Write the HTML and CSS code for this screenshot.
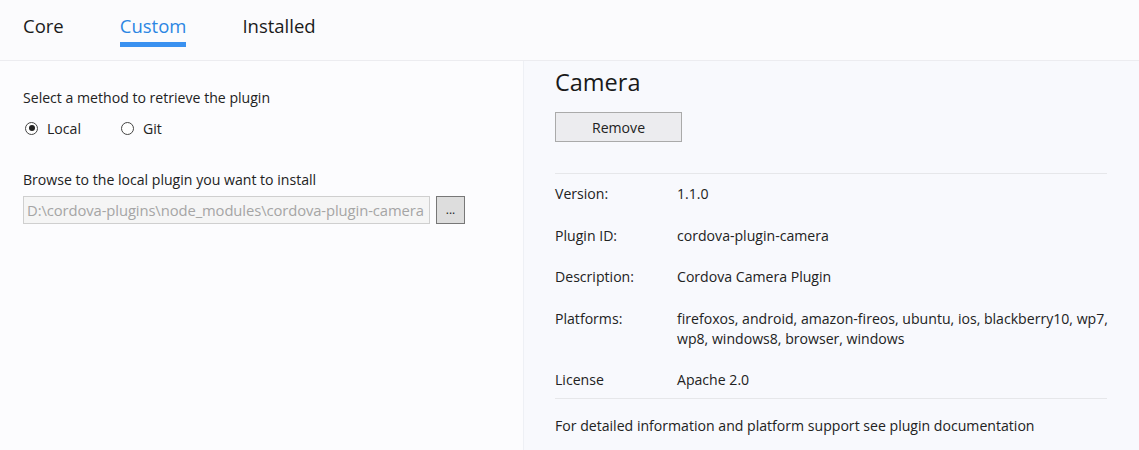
FILE: index.html
```html
<!DOCTYPE html>
<html>
<head>
<meta charset="utf-8">
<link rel="stylesheet" href="styles.css">
</head>
<body>
<div class="page">
  <header class="tabs">
    <div class="tab">Core</div>
    <div class="tab active">Custom</div>
    <div class="tab">Installed</div>
  </header>
  <main class="content">
    <section class="left">
      <div class="label">Select a method to retrieve the plugin</div>
      <div class="radios">
        <label class="radio"><span class="circle checked"></span>Local</label>
        <label class="radio"><span class="circle"></span>Git</label>
      </div>
      <div class="label browse-label">Browse to the local plugin you want to install</div>
      <div class="browse">
        <div class="path">D:\cordova-plugins\node_modules\cordova-plugin-camera</div>
        <button class="dots">...</button>
      </div>
    </section>
    <section class="right">
      <h1 class="title">Camera</h1>
      <button class="remove">Remove</button>
      <hr class="sep first">
      <div class="details">
        <div class="row"><div class="key">Version:</div><div class="val">1.1.0</div></div>
        <div class="row"><div class="key">Plugin ID:</div><div class="val">cordova-plugin-camera</div></div>
        <div class="row"><div class="key">Description:</div><div class="val">Cordova Camera Plugin</div></div>
        <div class="row"><div class="key">Platforms:</div><div class="val wide">firefoxos, android, amazon-fireos, ubuntu, ios, blackberry10, wp7, wp8, windows8, browser, windows</div></div>
        <div class="row"><div class="key">License</div><div class="val">Apache 2.0</div></div>
      </div>
      <hr class="sep">
      <div class="footer">For detailed information and platform support see plugin documentation</div>
    </section>
  </main>
</div>
</body>
</html>
```

FILE: styles.css
```css
* { box-sizing: border-box; }
html, body { margin: 0; padding: 0; }
body {
  font-family: "Open Sans", "Noto Sans", "Liberation Sans", sans-serif;
  font-size: 14.1px;
  color: #222;
  background: #fcfcfe;
  width: 1139px;
  height: 450px;
  overflow: hidden;
}
.page { display: flex; flex-direction: column; height: 450px; }
.tabs {
  height: 61px;
  display: flex;
  padding-left: 23px;
  background: #fbfbfd;
  border-bottom: 1px solid #ececf0;
}
.tab {
  font-size: 18.5px;
  color: #1a1a1a;
  padding-top: 13px;
  margin-right: 56px;
  height: 47px;
  border-bottom: 5px solid transparent;
  line-height: 25px;
}
.tab.active { color: #2b86e3; border-bottom-color: #3a91f0; }
.content { flex: 1; display: flex; }
.left {
  width: 524px;
  padding: 27px 23px 0 23px;
  border-right: 1px solid #eef0f5;
  background: #fcfcfe;
}
.label { line-height: 20px; }
.radios { display: flex; margin-top: 10px; height: 20px; align-items: center; }
.radio { display: flex; align-items: center; margin-left: 2px; }
.radio:first-child { width: 94px; }
.circle {
  width: 13px; height: 13px; border-radius: 50%;
  border: 1px solid #444; background: #fff;
  margin-right: 9px; position: relative;
}
.circle.checked::after {
  content: ""; position: absolute; left: 2.5px; top: 2.5px;
  width: 6px; height: 6px; border-radius: 50%; background: #222;
}
.browse-label { margin-top: 32px; }
.browse { display: flex; margin-top: 6px; gap: 6px; }
.path {
  width: 407px; height: 28px;
  border: 1px solid #cfcfcf; background: #f5f5f5;
  color: #a5a5a5; line-height: 26px; padding-left: 3px;
  white-space: nowrap; overflow: hidden;
  font-size: 14.8px; letter-spacing: -0.1px;
}
.dots {
  width: 29px; height: 28px; background: #dddddd;
  border: 1px solid #777; font: inherit; font-size: 12px;
  padding: 0; line-height: 20px; color: #222;
}
.right {
  flex: 1;
  background: #f8f9fd;
  padding: 0 32px 0 31px;
}
.title { font-size: 23.5px; font-weight: normal; margin: 5px 0 0 0; line-height: 32px; color: #1a1a1a; }
.remove {
  margin-top: 14px;
  width: 127px; height: 30px; background: #ececef;
  border: 1px solid #aaa; font: inherit; color: #222; padding: 0;
}
.sep { border: 0; border-top: 1px solid #e6e7ea; margin: 31px 0 0 0; }
.details { padding-top: 10px; padding-bottom: 8px; }
.row { display: flex; line-height: 20px; margin-bottom: 21.5px; }
.row:last-child { margin-bottom: 0; }
.key { width: 122px; flex: none; }
.val { flex: 1; }
.val.wide { margin-right: -20px; }
.sep:not(.first) { margin-top: 0; }
.footer { margin-top: 17px; line-height: 20px; }
```
